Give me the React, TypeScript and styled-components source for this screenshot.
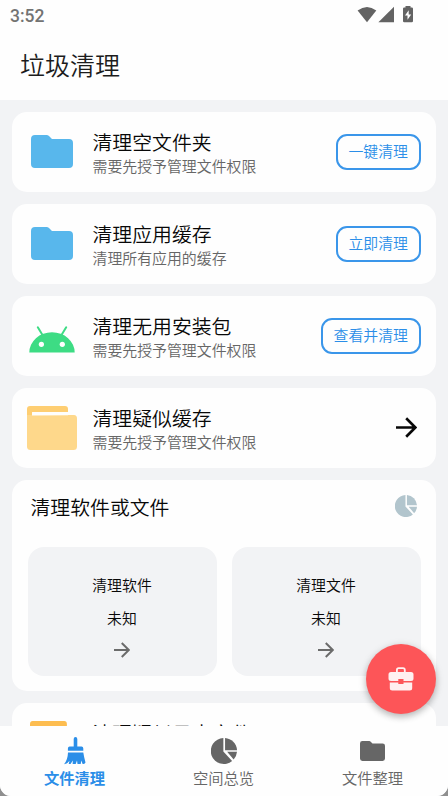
import React from "react";
import styled, { createGlobalStyle } from "styled-components";

const GlobalStyle = createGlobalStyle`
  *, *::before, *::after { box-sizing: border-box; }
  body {
    margin: 0;
    background: #8f8f8f;
    font-family: "Noto Sans CJK SC", "Noto Sans", sans-serif;
    font-weight: 350;
  }
  svg { display: block; flex: none; }
  button { font-family: inherit; font-weight: inherit; cursor: pointer; }
`;

const Screen = styled.div`
  position: relative;
  display: flex;
  flex-direction: column;
  width: 448px;
  height: 796px;
  overflow: hidden;
  background: #f2f3f5;
  border-radius: 0 0 11px 11px;
`;

const StatusBar = styled.div`
  display: flex;
  align-items: center;
  justify-content: space-between;
  height: 32px;
  padding: 0 34px 2px 10px;
  background: #fefefe;
`;

const Clock = styled.span`
  padding-top: 2px;
  font: 500 17.5px/30px Roboto, sans-serif;
  color: #737373;
`;

const Header = styled.header`
  height: 67.5px;
  padding-left: 20px;
  background: #fefefe;
`;

const PageTitle = styled.h1`
  margin: 0;
  font-size: 25px;
  font-weight: 350;
  line-height: 64px;
  color: #1c1c1c;
`;

const Content = styled.main`
  display: flex;
  flex: 1;
  flex-direction: column;
  gap: 12px;
  min-height: 0;
  padding: 12.5px 12.5px 0 12px;
  overflow: hidden;
`;

const Card = styled.section`
  flex: none;
  background: #fefefe;
  border-radius: 15px;
`;

const Row = styled(Card)`
  display: flex;
  align-items: center;
  height: 80px;
  padding: 0 15px 1px;
`;

const IconSlot = styled.div`
  display: flex;
  align-items: center;
  justify-content: center;
  width: 50px;
  height: 50px;
  margin-right: 15.5px;
`;

const RowText = styled.div`
  flex: 1;
  height: 47px;
  white-space: nowrap;
`;

const RowTitle = styled.div`
  font-size: 19.85px;
  line-height: 28px;
  color: #080808;
`;

const RowNote = styled.div`
  font-size: 14.9px;
  line-height: 20px;
  color: #666;
`;

const OutlineButton = styled.button`
  height: 36px;
  padding: 0 10.5px 1px;
  border: 2px solid #3a96ea;
  border-radius: 11px;
  background: transparent;
  color: #2b8ee8;
  font-size: 14.9px;
  line-height: 30px;
  white-space: nowrap;
`;

const ArrowSlot = styled.div`
  margin-right: 4px;
`;

const GroupCard = styled(Card)`
  height: 211px;
  padding: 0 15px 0 15.5px;
`;

const GroupHeader = styled.div`
  display: flex;
  align-items: center;
  justify-content: space-between;
  height: 67px;
  padding: 0 4px 15px 3px;
  font-size: 19.85px;
  color: #080808;
`;

const Tiles = styled.div`
  display: grid;
  grid-template-columns: 1fr 1fr;
  gap: 15px;
`;

const Tile = styled.div`
  display: flex;
  flex-direction: column;
  align-items: center;
  height: 129px;
  padding-top: 21px;
  border-radius: 16px;
  background: #f2f3f5;
  color: #080808;
  font-size: 14.9px;
  line-height: 33px;

  svg { margin-top: 8px; }
`;

const NavBar = styled.nav`
  display: grid;
  grid-template-columns: repeat(3, 1fr);
  flex: none;
  height: 70px;
  padding-right: 1px;
  background: #fefefe;
`;

const NavItem = styled.div<{ $active?: boolean }>`
  display: flex;
  flex-direction: column;
  align-items: center;
  padding-top: 10px;
  color: ${(p) => (p.$active ? "#2b8ee8" : "#666")};
  font-size: 15.3px;
  font-weight: ${(p) => (p.$active ? 700 : 350)};
  line-height: 22px;
`;

const NavIcon = styled.div`
  display: flex;
  align-items: center;
  justify-content: center;
  width: 30px;
  height: 30px;
`;

const Fab = styled.button`
  position: absolute;
  right: 12.5px;
  bottom: 82px;
  display: flex;
  align-items: center;
  justify-content: center;
  width: 70px;
  height: 70px;
  padding: 0;
  border: 0;
  border-radius: 50%;
  background: #fd5558;
  box-shadow: 0 3px 6px rgba(0, 0, 0, 0.2), 0 2px 10px rgba(0, 0, 0, 0.12);
`;

const StatusIcons = () => (
  <svg width="57" height="18" viewBox="0 0 57 18" fill="#636363">
    <path d="M.6 4.6Q10-2.500 19.300 4.600L10 16.300Z" />
    <path d="M21.400 16.300 37 .800V16.300Z" />
    <path d="M48.500 0h5v1.600h1.300q1.200 0 1.200 1.200v12.300q0 1.200-1.200 1.200h-7.600q-1.200 0-1.200-1.200v-12.300q0-1.200 1.200-1.200h1.300Z" />
    <path d="M51.700 4.200 48 9.600h2.500v4.200l3.700-5.300h-2.500Z" fill="#fefefe" />
  </svg>
);

const FolderIcon = ({ width, height, color }: { width: number; height: number; color: string }) => (
  <svg width={width} height={height} viewBox="0 0 42 33" preserveAspectRatio="none" fill={color}>
    <path d="M4 0H15.500Q17 0 18 1.100L21 4H38Q42 4 42 8V29Q42 33 38 33H4Q0 33 0 29V4Q0 0 4 0Z" />
  </svg>
);

const AndroidIcon = () => (
  <svg width="46" height="34" viewBox="0 -7 46 34">
    <path d="M.3 26.500A22.700 20.300 0 0 1 45.700 26.500Z" fill="#3ddc84" />
    <path d="m8.800 1.300 4.400 7.200M37.200 1.300l-4.400 7.200" stroke="#3ddc84" strokeWidth="2" strokeLinecap="round" />
    <circle cx="12.400" cy="18.300" r="2.600" fill="#fefefe" />
    <circle cx="33.300" cy="18.300" r="2.600" fill="#fefefe" />
  </svg>
);

interface StackedFolderProps {
  back: string;
  front: string;
  width?: number;
}

const StackedFolderIcon = ({ back, front, width = 50 }: StackedFolderProps) => (
  <svg width={width} height="44" viewBox="0 0 50 44" preserveAspectRatio="none">
    <path d="M3 0H38Q41 0 41 3V6H6Q5 6 5 7V12H0V3Q0 0 3 0Z" fill={back} />
    <path d="M0 9H47Q50 9.300 50 12.500V40.500Q50 44 46.500 44H3.500Q0 44 0 40.500Z" fill={front} />
    <path d="M5 9.500V7Q5 6 6 6H41V9.300Z" fill="#fefefe" />
  </svg>
);

const ArrowIcon = ({ size, color }: { size: number; color: string }) => (
  <svg width={size} height={size} viewBox="0 0 20 20" fill="none" stroke={color} strokeWidth="2.500">
    <path d="M0 10H18.200M9.700 1.200 18.500 10 9.700 18.800" />
  </svg>
);

const PieIcon = ({ size, color }: { size: number; color: string }) => (
  <svg width={size} height={size} viewBox="0 0 24 24" fill={color}>
    <path d="M11.400 0V12.500L19.500 21.200A12 12 0 1 1 11.400 0Z" />
    <path d="M13 0A12 12 0 0 1 24 11.200H13Z" />
    <path d="M14.900 12.800H24A12 12 0 0 1 20.900 19.900Z" />
  </svg>
);

const BroomIcon = () => (
  <svg width="22" height="28" viewBox="0 0 22 28" fill="currentColor">
    <path d="M9.700 2Q9.700 0 11.500 0T13.300 2V9.600H17.500Q19.300 9.600 19.300 11.400V13.700H3.900V11.400Q3.900 9.600 5.700 9.600H9.700Z" />
    <path d="M4 15.400H19.300Q20 20 21.500 25.500Q20.200 27.500 18.600 26.900L17.300 23.500L16.700 27H13.500L13 23.500L11.700 27H8.600L8.900 23.500L6.500 27H4.700L5.500 23.800Q3.700 26.700 0 27.200Q3.800 22.500 4 15.400Z" />
  </svg>
);

const BriefcaseIcon = () => (
  <svg width="26" height="24" viewBox="0 0 26 24">
    <path d="M8.900 6V3Q8.900 1.200 10.700 1.200H15Q16.800 1.200 16.800 3V6" fill="none" stroke="#fff0f0" strokeWidth="1.800" />
    <path d="M3 5H23Q25.500 5 25.500 7.500V11.500Q25.500 14 23 14H15.500V12H10.300V14H3Q.5 14 .5 11.500V7.500Q.5 5 3 5Z" fill="#fff0f0" />
    <path d="M1.800 15.400H10.300V17H15.500V15.400H24.200V21Q24.200 23.500 21.700 23.500H4.300Q1.800 23.500 1.800 21Z" fill="#fff0f0" />
  </svg>
);

interface CleanRowProps {
  icon: React.ReactNode;
  title: string;
  note?: string;
  action?: string;
}

const CleanRow = ({ icon, title, note, action }: CleanRowProps) => (
  <Row>
    <IconSlot>{icon}</IconSlot>
    <RowText>
      <RowTitle>{title}</RowTitle>
      {note && <RowNote>{note}</RowNote>}
    </RowText>
    {action ? (
      <OutlineButton>{action}</OutlineButton>
    ) : (
      <ArrowSlot>
        <ArrowIcon size={21} color="#080808" />
      </ArrowSlot>
    )}
  </Row>
);

export default function App() {
  return (
    <Screen>
      <GlobalStyle />
      <StatusBar>
        <Clock>3:52</Clock>
        <StatusIcons />
      </StatusBar>
      <Header>
        <PageTitle>垃圾清理</PageTitle>
      </Header>
      <Content>
        <CleanRow
          icon={<FolderIcon width={42} height={33} color="#58b7ec" />}
          title="清理空文件夹"
          note="需要先授予管理文件权限"
          action="一键清理"
        />
        <CleanRow
          icon={<FolderIcon width={42} height={33} color="#58b7ec" />}
          title="清理应用缓存"
          note="清理所有应用的缓存"
          action="立即清理"
        />
        <CleanRow icon={<AndroidIcon />} title="清理无用安装包" note="需要先授予管理文件权限" action="查看并清理" />
        <CleanRow
          icon={<StackedFolderIcon back="#fece72" front="#fed88b" />}
          title="清理疑似缓存"
          note="需要先授予管理文件权限"
        />
        <GroupCard>
          <GroupHeader>
            清理软件或文件
            <PieIcon size={22} color="#b2c5cd" />
          </GroupHeader>
          <Tiles>
            {["清理软件", "清理文件"].map((name) => (
              <Tile key={name}>
                <span>{name}</span>
                <span>未知</span>
                <ArrowIcon size={16} color="#6b6b6b" />
              </Tile>
            ))}
          </Tiles>
        </GroupCard>
        <CleanRow
          icon={<StackedFolderIcon back="#fdbd50" front="#fed88b" width={45} />}
          title="清理疑似日志文件"
        />
      </Content>
      <NavBar>
        <NavItem $active>
          <NavIcon>
            <BroomIcon />
          </NavIcon>
          文件清理
        </NavItem>
        <NavItem>
          <NavIcon>
            <PieIcon size={26} color="#666" />
          </NavIcon>
          空间总览
        </NavItem>
        <NavItem>
          <NavIcon>
            <FolderIcon width={25} height={20} color="#666" />
          </NavIcon>
          文件整理
        </NavItem>
      </NavBar>
      <Fab aria-label="工具箱">
        <BriefcaseIcon />
      </Fab>
    </Screen>
  );
}
